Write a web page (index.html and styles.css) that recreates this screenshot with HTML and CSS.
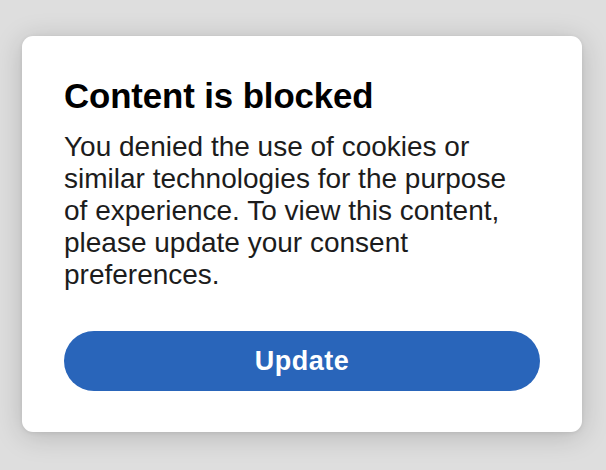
FILE: index.html
```html
<!DOCTYPE html>
<html lang="en">
<head>
<meta charset="utf-8">
<title>Content is blocked</title>
<link rel="stylesheet" href="styles.css">
</head>
<body>
  <div class="card">
    <h1 class="title">Content is blocked</h1>
    <p class="message">You denied the use of cookies or similar technologies for the purpose of experience. To view this content, please update your consent preferences.</p>
    <button class="update-btn" type="button">Update</button>
  </div>
</body>
</html>
```
FILE: styles.css
```css
html, body {
  margin: 0;
  padding: 0;
}

body {
  width: 606px;
  height: 470px;
  overflow: hidden;
  background: #dedede;
  font-family: "Liberation Sans", Arial, Helvetica, sans-serif;
  padding-top: 36px;
  box-sizing: border-box;
}

.card {
  margin-left: 22px;
  width: 560px;
  height: 396px;
  box-sizing: border-box;
  padding: 40px 42px 41px;
  background: #ffffff;
  border-radius: 11px;
  box-shadow: 0 4px 28px rgba(0, 0, 0, 0.18), 0 1px 4px rgba(0, 0, 0, 0.08);
  display: flex;
  flex-direction: column;
}

.title {
  margin: 0;
  font-size: 34.8px;
  line-height: 40px;
  font-weight: 700;
  color: #000;
  letter-spacing: -0.1px;
}

.message {
  margin: 15px 0 0;
  max-width: 460px;
  font-size: 28px;
  line-height: 32px;
  color: #1c1c1c;
}

.update-btn {
  margin-top: 40px;
  height: 60px;
  width: 100%;
  border: none;
  border-radius: 30px;
  background: #2965ba;
  color: #ffffff;
  font-family: "Liberation Sans", Arial, Helvetica, sans-serif;
  font-size: 27px;
  font-weight: 700;
  letter-spacing: 0.5px;
  padding: 0;
  cursor: pointer;
}
```
